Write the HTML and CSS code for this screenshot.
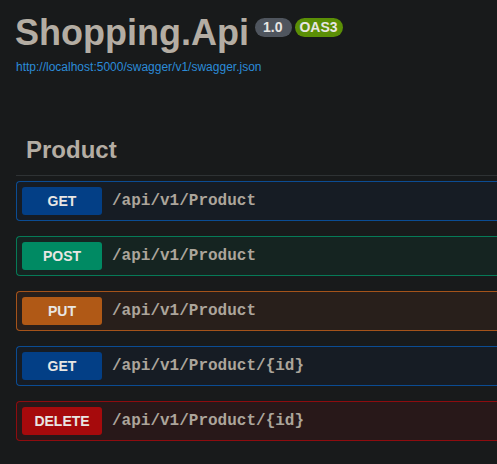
FILE: index.html
```html
<!DOCTYPE html>
<html lang="en">
<head>
<meta charset="utf-8">
<title>Shopping.Api</title>
<link rel="stylesheet" href="styles.css">
</head>
<body>
<div class="wrapper">
  <div class="info">
    <div class="title-row">
      <h1 class="title">Shopping.Api</h1>
      <span class="pill pill-version">1.0</span>
      <span class="pill pill-oas">OAS3</span>
    </div>
    <a class="spec-link" href="#">http://localhost:5000/swagger/v1/swagger.json</a>
  </div>

  <section class="tag-section">
    <h3 class="tag-title">Product</h3>

    <div class="opblock op-get">
      <span class="method">GET</span>
      <span class="path">/api/v1/Product</span>
    </div>
    <div class="opblock op-post">
      <span class="method">POST</span>
      <span class="path">/api/v1/Product</span>
    </div>
    <div class="opblock op-put">
      <span class="method">PUT</span>
      <span class="path">/api/v1/Product</span>
    </div>
    <div class="opblock op-get">
      <span class="method">GET</span>
      <span class="path">/api/v1/Product/{id}</span>
    </div>
    <div class="opblock op-delete">
      <span class="method">DELETE</span>
      <span class="path">/api/v1/Product/{id}</span>
    </div>
  </section>
</div>
</body>
</html>
```

FILE: styles.css
```css
html, body {
  margin: 0;
  padding: 0;
  background: #181a1b;
}

body {
  font-family: "Liberation Sans", Arial, sans-serif;
  color: #b4ada3;
}

.wrapper {
  padding: 13px 0 0 16px;
}

.title-row {
  display: flex;
  align-items: flex-start;
}

.title {
  margin: 0 0 0 -1px;
  font-size: 36px;
  line-height: 40px;
  font-weight: bold;
  color: #b4ada3;
}

.pill {
  display: inline-block;
  margin-top: 5px;
  font-size: 14px;
  line-height: 15px;
  font-weight: bold;
  color: #e8e6e3;
  padding: 2px 5px 2px 4px;
  border-radius: 10px;
}

.pill-version {
  margin-left: 6px;
  padding: 2px 10px 2px 8px;
  background: #4f555e;
}

.pill-oas {
  margin-left: 3px;
  background: #5b8f06;
}

.spec-link {
  display: block;
  margin-top: 7px;
  font-size: 12px;
  line-height: 14px;
  color: #2b8bd8;
  text-decoration: none;
}

.tag-section {
  margin-top: 52px;
}

.tag-title {
  margin: 0 0 5px 0;
  padding: 10px 20px 11px 10px;
  font-size: 24px;
  line-height: 28px;
  font-weight: bold;
  color: #b4ada3;
  border-bottom: 1px solid #2e3234;
}

.opblock {
  display: flex;
  align-items: center;
  padding: 5px;
  margin-bottom: 15px;
  border: 1px solid;
  border-right: 0;
  border-radius: 4px 0 0 4px;
}

.method {
  min-width: 80px;
  padding: 6px 0;
  border-radius: 3px;
  text-align: center;
  font-size: 14px;
  line-height: 16px;
  font-weight: bold;
  color: #e8e6e3;
}

.path {
  padding: 0 10px;
  font-family: "Liberation Mono", "Courier New", monospace;
  font-size: 16px;
  font-weight: bold;
  color: #aca59b;
}

.op-get { background: #161c24; border-color: #0b4c93; }
.op-get .method { background: #033f86; }

.op-post { background: #152421; border-color: #067a57; }
.op-post .method { background: #008a63; }

.op-put { background: #281f1b; border-color: #a5531a; }
.op-put .method { background: #b05916; }

.op-delete { background: #281819; border-color: #8e0c0f; }
.op-delete .method { background: #a60a0c; }
```
